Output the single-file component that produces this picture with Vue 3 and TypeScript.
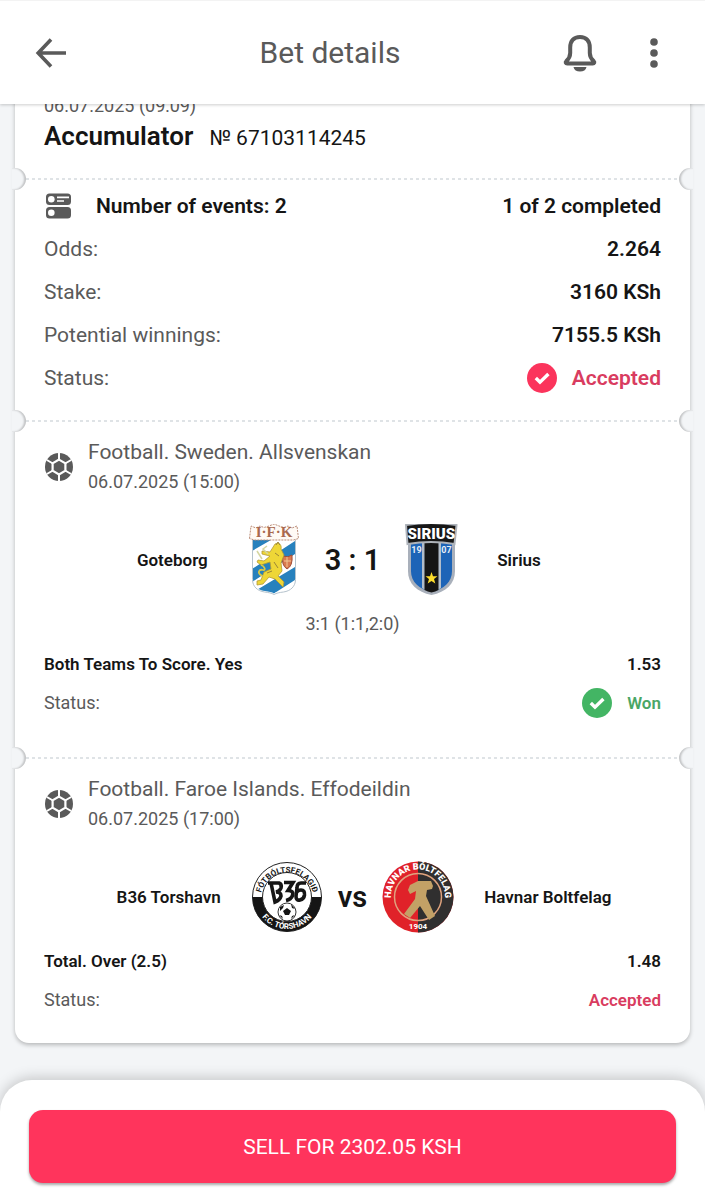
<script setup lang="ts">
type CrestName = 'goteborg' | 'sirius' | 'b36' | 'havnar'

interface Team {
  name: string
  crest: CrestName
}

interface BetEvent {
  id: number
  league: string
  date: string
  home: Team
  away: Team
  score: string
  periods?: string
  market: string
  odds: string
  status: string
  won: boolean
}

const summary: { label: string; value: string }[] = [
  { label: 'Odds:', value: '2.264' },
  { label: 'Stake:', value: '3160 KSh' },
  { label: 'Potential winnings:', value: '7155.5 KSh' },
]

const events: BetEvent[] = [
  {
    id: 1,
    league: 'Football. Sweden. Allsvenskan',
    date: '06.07.2025 (15:00)',
    home: { name: 'Goteborg', crest: 'goteborg' },
    away: { name: 'Sirius', crest: 'sirius' },
    score: '3 : 1',
    periods: '3:1 (1:1,2:0)',
    market: 'Both Teams To Score. Yes',
    odds: '1.53',
    status: 'Won',
    won: true,
  },
  {
    id: 2,
    league: 'Football. Faroe Islands. Effodeildin',
    date: '06.07.2025 (17:00)',
    home: { name: 'B36 Torshavn', crest: 'b36' },
    away: { name: 'Havnar Boltfelag', crest: 'havnar' },
    score: 'vs',
    market: 'Total. Over (2.5)',
    odds: '1.48',
    status: 'Accepted',
    won: false,
  },
]

const sides = ['home', 'away'] as const
</script>

<template>
  <div class="page">
    <header class="bar">
      <button class="icon-btn" type="button" aria-label="Back">
        <svg width="32" height="32" viewBox="0 0 32 32" fill="none" stroke="currentColor" stroke-width="3.6">
          <path d="M16 2.500 3.200 16 16 29.500M3 16h28" />
        </svg>
      </button>
      <h1 class="title">Bet details</h1>
      <div class="actions">
        <button class="icon-btn" type="button" aria-label="Notifications">
          <svg width="36" height="38" viewBox="0 0 36 38">
            <path
              d="M18 3C11.5 3 8.200 7.300 8.200 13.500V19c0 3.500-1 5.500-4 8.300-1 1-.5 2.200 1 2.200h25.600c1.500 0 2-1.200 1-2.200-3-2.800-4-4.800-4-8.300v-5.500C27.800 7.300 24.500 3 18 3Z"
              fill="none" stroke="currentColor" stroke-width="4" stroke-linejoin="round"
            />
            <path d="M11.500 33h13c-.5 3-3 4.500-6.500 4.500s-6-1.500-6.500-4.500Z" fill="currentColor" />
          </svg>
        </button>
        <button class="icon-btn" type="button" aria-label="More">
          <svg width="8" height="30" viewBox="0 0 8 30" fill="currentColor">
            <circle cx="4" cy="4" r="3.800" />
            <circle cx="4" cy="15" r="3.800" />
            <circle cx="4" cy="26" r="3.800" />
          </svg>
        </button>
      </div>
    </header>

    <main class="content">
      <article class="ticket">
        <section class="intro">
          <p class="placed">06.07.2025 (09:09)</p>
          <div class="kind">
            <h2>Accumulator</h2>
            <span>№ 67103114245</span>
          </div>
        </section>

        <div class="tear"></div>

        <section class="summary">
          <div class="row strong">
            <span class="count">
              <svg width="27" height="26" viewBox="0 0 27 26">
                <rect x="1" y="0.500" width="25" height="11.500" rx="3.500" fill="#5a5a5a" />
                <rect x="1" y="14" width="25" height="11.500" rx="3.500" fill="#5a5a5a" />
                <circle cx="6.300" cy="6.200" r="3.300" fill="#fff" />
                <circle cx="6.300" cy="19.800" r="3.300" fill="#fff" />
                <path d="M12 4.300h12M12 8h7" stroke="#fff" stroke-width="1.700" />
              </svg>
              Number of events: 2
            </span>
            <span>1 of 2 completed</span>
          </div>
          <div v-for="item in summary" :key="item.label" class="row">
            <span class="label">{{ item.label }}</span>
            <span class="value">{{ item.value }}</span>
          </div>
          <div class="row">
            <span class="label">Status:</span>
            <span class="status accepted">
              <svg width="30" height="30" viewBox="0 0 30 30">
                <circle cx="15" cy="15" r="15" fill="#fb345c" />
                <path d="m8.800 15 4.200 4.200 8.400-8.200" fill="none" stroke="#fff" stroke-width="3.400" />
              </svg>
              Accepted
            </span>
          </div>
        </section>

        <template v-for="ev in events" :key="ev.id">
          <div class="tear"></div>
          <section class="event">
            <div class="league">
              <svg class="ball" width="28" height="28" viewBox="0 0 28 28">
                <circle cx="14" cy="14" r="14" fill="#5a5a5a" />
                <path
                  d="M14 0v7M14 21v7M1.900 7l6 3.500M26.100 7l-6 3.500M1.900 21l6-3.500M26.100 21l-6-3.500"
                  stroke="#fff" stroke-width="2"
                />
                <path
                  d="M14 6.600 20.400 10.300v7.400L14 21.400l-6.400-3.700v-7.400Z"
                  fill="#5a5a5a" stroke="#fff" stroke-width="2.200"
                />
              </svg>
              <div>
                <h3>{{ ev.league }}</h3>
                <p>{{ ev.date }}</p>
              </div>
            </div>

            <div class="match">
              <template v-for="side in sides" :key="side">
                <div class="team" :class="side">
                  <span class="name">{{ ev[side].name }}</span>

                  <svg v-if="ev[side].crest === 'goteborg'" class="crest" viewBox="0 0 72 72">
                    <defs>
                      <clipPath id="gbg-shield">
                        <path d="M15 16h42v39c0 7-5 11-12 12-4 .5-7 1-9 2.500-2-1.500-5-2-9-2.500-7-1-12-5-12-12Z" />
                      </clipPath>
                    </defs>
                    <path
                      d="M14.500 15h43v40.500c0 7-5 11.500-12 12.500-4 .5-7 1-9.500 2.500-2.500-1.500-5.500-2-9.500-2.500-7-1-12-5.500-12-12.500Z"
                      fill="#fff" stroke="#b5c3cd"
                    />
                    <g clip-path="url(#gbg-shield)">
                      <path d="M14 16h19L14 27ZM57 17v13L14 58V45ZM57 43v13L32 72H20l-3-5Z" fill="#2781bd" />
                    </g>
                    <path
                      d="M11.500 14.500 13 2l5 2 4-2 4 1.500L31 2l5-2 5 2 5 1.500L50 2l4 2 5-2 1.500 12.500-5 1.500h-39Z"
                      fill="#fffaf5" stroke="#bb8c77" stroke-dasharray="2 1"
                    />
                    <text x="36" y="13.400" text-anchor="middle" class="gbg-name">I·F·K</text>
                    <path d="M45 32q5 2 9-1 1 11-5 14-6-4-4-13Z" fill="#d9794f" stroke="#a24f38" />
                    <path d="M49 33v10M46 37h7" stroke="#f2c894" />
                    <path
                      d="M37 20c4-2 7 1 6 5l3 6-3 8 1 8-4 5 6 6-1 5-8-8-6-2-6 7-6 1v-4l4-1 3-8 7-3-1-7-9 3-4-3 1-2 6 1 6-5-8-2v-3l8 1Z"
                      fill="#eed637" stroke="#b49a33" stroke-width=".8"
                    />
                    <path d="M24 52c-6-4-2-7 1-6s2-4-2-5" fill="none" stroke="#d8c846" stroke-width="1.800" />
                    <path d="m38 21 2-3 2 3M37 29l4 3M36 38l4 6M29 49l5-2" stroke="#9b8636" fill="none" />
                    <path d="m24 35-5-8M30 30l-5-5 4-3" fill="none" stroke="#d5d6a0" stroke-width="1.500" />
                  </svg>

                  <svg v-else-if="ev[side].crest === 'sirius'" class="crest" viewBox="0 0 72 72">
                    <path d="M13 18h47v29c0 13-9 21-23.500 24C22 68 13 60 13 47Z" fill="#a9b0bb" />
                    <path d="M16 18h41v29c0 11-8 18-20.500 21C24 65 16 58 16 47Z" fill="#1d64b7" />
                    <path d="M27 18h19v46q-4 3-9.500 4.500Q31 67 27 64Z" fill="#b2bdca" />
                    <path d="M29.500 18h14v48q-3 1.500-7 2.500-4-1-7-2.500Z" fill="#151515" />
                    <path d="M11 1Q36-3 61.500 1l-2 19Q36 16 12.500 20Z" fill="#171717" stroke="#aeb3ba" stroke-width="2" />
                    <text x="36.300" y="15" text-anchor="middle" class="sirius-name">SIRIUS</text>
                    <text x="21.500" y="28.500" text-anchor="middle" class="sirius-year">19</text>
                    <text x="51.500" y="28.500" text-anchor="middle" class="sirius-year">07</text>
                    <path d="m36.500 48 1.500 4.200h4.500L39 55l1.300 4.500-3.800-2.600-3.800 2.600L34 55l-3.500-2.800H35Z" fill="#fddd2c" />
                  </svg>

                  <svg v-else-if="ev[side].crest === 'b36'" class="crest" viewBox="0 0 72 72">
                    <defs>
                      <path id="b36-top" d="M9.500 38a26.500 26.500 0 0 1 53 0" />
                      <path id="b36-bottom" d="M4 36a32 32 0 0 0 64 0" />
                    </defs>
                    <circle cx="36" cy="36" r="34.500" fill="#fff" stroke="#222" />
                    <path d="M1.500 36a34.500 34.500 0 0 0 69 0Z" fill="#151515" />
                    <circle cx="36" cy="36" r="24.500" fill="#fff" stroke="#222" />
                    <text class="b36-ring"><textPath href="#b36-top" startOffset="50%" text-anchor="middle">FÓTBÓLTSFELAGIÐ</textPath></text>
                    <text class="b36-ring light"><textPath href="#b36-bottom" startOffset="50%" text-anchor="middle">F.C. TÓRSHAVN</textPath></text>
                    <g fill="none" stroke="#151515" stroke-width="3.600">
                      <path d="M17 22h11q3 1 2 5-1 3-5 4 5 0 5 4-1 4-6 6l-4-19" />
                      <path d="M33 21.500h9l-5 8q6 0 4.500 5-1.500 4-6.500 5" />
                      <path d="M55 22H50q-4 0-4 5l-1 8q0 5 4 4 4-1 4.500-5 .5-5-3.500-5-3 0-5 3" />
                    </g>
                    <circle cx="36" cy="51" r="9" fill="#fff" stroke="#333" />
                    <path d="m36 47 4 3-2 4h-4l-2-4ZM29 46l4-2-1 3-3 3ZM40 43l4 5-3-1ZM28 54l3 1 1 3ZM40 58l1-3 3-1Z" fill="#151515" />
                  </svg>

                  <svg v-else class="crest" viewBox="0 0 72 72">
                    <defs>
                      <path id="hb-top" d="M10.200 43.500a27 27 0 1 1 51.600 0" />
                    </defs>
                    <circle cx="36" cy="36" r="35.500" fill="#e02229" />
                    <path d="M36 .5a35.500 35.500 0 0 1 0 71Z" fill="#302f2f" />
                    <circle cx="36" cy="36" r="23.500" fill="none" stroke="#dfa37e" stroke-width="1.500" />
                    <path
                      d="m28 24 8-4h13l2 5-1 3-5 1-1 6 9 20-6 4-9-14-10 12-6-4 11-15 1-8-6 3-2-4Z"
                      fill="#c3a166"
                    />
                    <text class="hb-ring"><textPath href="#hb-top" startOffset="50%" text-anchor="middle">HAVNAR BÓLTFELAG</textPath></text>
                    <text x="36" y="68" text-anchor="middle" class="hb-year">1904</text>
                  </svg>
                </div>
                <strong v-if="side === 'home'" class="score">{{ ev.score }}</strong>
              </template>
            </div>

            <p v-if="ev.periods" class="periods">{{ ev.periods }}</p>

            <div class="bet">
              <div class="line market">
                <span>{{ ev.market }}</span>
                <span>{{ ev.odds }}</span>
              </div>
              <div class="line">
                <span class="label">Status:</span>
                <span class="status" :class="ev.won ? 'won' : 'accepted'">
                  <svg v-if="ev.won" width="30" height="30" viewBox="0 0 30 30">
                    <circle cx="15" cy="15" r="15" fill="#43b564" />
                    <path d="m8.800 15 4.200 4.200 8.400-8.200" fill="none" stroke="#fff" stroke-width="3.400" />
                  </svg>
                  {{ ev.status }}
                </span>
              </div>
            </div>
          </section>
        </template>
      </article>
    </main>

    <footer class="sheet">
      <button class="sell" type="button">SELL FOR 2302.05 KSH</button>
    </footer>
  </div>
</template>

<style>
body {
  background: #f3f5f7;
}
</style>

<style scoped>
.page {
  display: flex;
  flex-direction: column;
  min-height: 100vh;
  background: #f3f5f7;
  color: #151515;
  font-family: Roboto, 'Noto Sans', sans-serif;
  font-size: 21px;
}

h1,
h2,
h3,
p {
  margin: 0;
  font-weight: 400;
}

.bar {
  position: sticky;
  top: 0;
  z-index: 2;
  display: grid;
  grid-template-columns: 1fr auto 1fr;
  align-items: center;
  box-sizing: border-box;
  height: 104px;
  padding: 0 47px 0 35px;
  background: #fff;
  border-top: 1px solid #f3f3f3;
  box-shadow: 0 1px 3px rgba(0, 0, 0, 0.2);
  color: #5a5a5a;
}

.title {
  padding-right: 33px;
  font-size: 30px;
  line-height: 36px;
}

.icon-btn {
  display: flex;
  justify-self: start;
  padding: 0;
  border: 0;
  background: none;
  color: inherit;
}

.actions {
  display: flex;
  justify-content: flex-end;
  align-items: center;
  gap: 52px;
}

.content {
  flex: 1;
  padding: 0 15px 37px;
}

.ticket {
  margin-top: -20px;
  background: #fff;
  border-radius: 0 0 14px 14px;
  box-shadow: 0 2px 4px rgba(0, 0, 0, 0.25);
}

.intro {
  padding: 12px 29px 24px;
}

.placed {
  font-size: 18px;
  line-height: 20px;
  color: #5a5a5a;
}

.kind {
  display: flex;
  align-items: baseline;
  gap: 16px;
  padding-top: 4px;
  line-height: 32px;
}

.kind h2 {
  font-size: 26px;
  font-weight: 600;
}

.tear {
  position: relative;
  height: 2px;
  margin: 0 11px;
  background: repeating-linear-gradient(90deg, #dfe3e6 0 3px, transparent 3px 6px);
}

.tear::before,
.tear::after {
  content: '';
  position: absolute;
  top: -10px;
  width: 14px;
  height: 22px;
  background: #f3f5f7;
}

.tear::before {
  right: 100%;
  border-radius: 0 11px 11px 0;
  box-shadow: inset -2px 0 2px rgba(0, 0, 0, 0.2);
}

.tear::after {
  left: 100%;
  border-radius: 11px 0 0 11px;
  box-shadow: inset 2px 0 2px rgba(0, 0, 0, 0.2);
}

.summary {
  padding: 4px 29px 21px;
}

.row,
.line {
  display: flex;
  align-items: center;
  justify-content: space-between;
}

.row {
  height: 43px;
}

.strong,
.value {
  font-weight: 600;
}

.label {
  color: #5a5a5a;
}

.count {
  display: flex;
  align-items: center;
  gap: 24px;
  padding-left: 1px;
}

.status {
  display: flex;
  align-items: center;
  gap: 15px;
  font-weight: 600;
}

.accepted {
  color: #d93c60;
}

.won {
  color: #4aa665;
}

.event {
  padding: 15px 29px 35px;
}

.event:last-child {
  padding-bottom: 24px;
}

.league {
  display: flex;
  align-items: center;
  gap: 15px;
  padding-left: 1px;
  line-height: 30px;
  color: #5a5a5a;
}

.league h3 {
  font-size: 21px;
}

.league p {
  font-size: 18px;
}

.match {
  display: grid;
  grid-template-columns: 1fr auto 1fr;
  align-items: center;
  gap: 15px;
  margin-top: 27px;
}

.team {
  display: flex;
  align-items: center;
  justify-content: flex-end;
  gap: 30px;
  font-size: 17px;
  font-weight: 600;
}

.team.away {
  flex-direction: row-reverse;
}

.crest {
  width: 72px;
  height: 72px;
  flex: none;
}

.score {
  font-size: 29px;
  line-height: 36px;
  font-weight: 600;
}

.periods {
  margin-top: 16px;
  font-size: 18px;
  line-height: 24px;
  text-align: center;
  color: #5a5a5a;
}

.bet {
  margin-top: 8px;
  font-size: 18px;
}

.line {
  height: 39px;
}

.market,
.line .status {
  font-size: 17px;
  font-weight: 600;
}

.sheet {
  position: sticky;
  bottom: 0;
  z-index: 1;
  padding: 30px 29px 17px;
  background: #fff;
  border-radius: 32px 32px 0 0;
  box-shadow: 0 -2px 14px rgba(0, 0, 0, 0.2);
}

.sell {
  display: block;
  width: 100%;
  height: 73px;
  border: 0;
  border-radius: 14px;
  background: #ff345c;
  box-shadow: 0 2px 3px rgba(0, 0, 0, 0.35);
  color: #fff;
  font: 400 21px Roboto, 'Noto Sans', sans-serif;
}

.gbg-name {
  font: 700 15px 'Liberation Serif', serif;
  fill: #a9694e;
}

.sirius-name {
  font: 900 15px Roboto, sans-serif;
  fill: #fff;
}

.sirius-year {
  font: 700 9px Roboto, sans-serif;
  fill: #e8eef6;
}

.b36-ring {
  font: 700 8px Roboto, sans-serif;
  fill: #151515;
}

.b36-ring.light {
  fill: #fff;
}

.hb-ring {
  font: 900 9px Roboto, sans-serif;
  fill: #fff;
}

.hb-year {
  font: 700 8px Roboto, sans-serif;
  fill: #fff;
}
</style>
